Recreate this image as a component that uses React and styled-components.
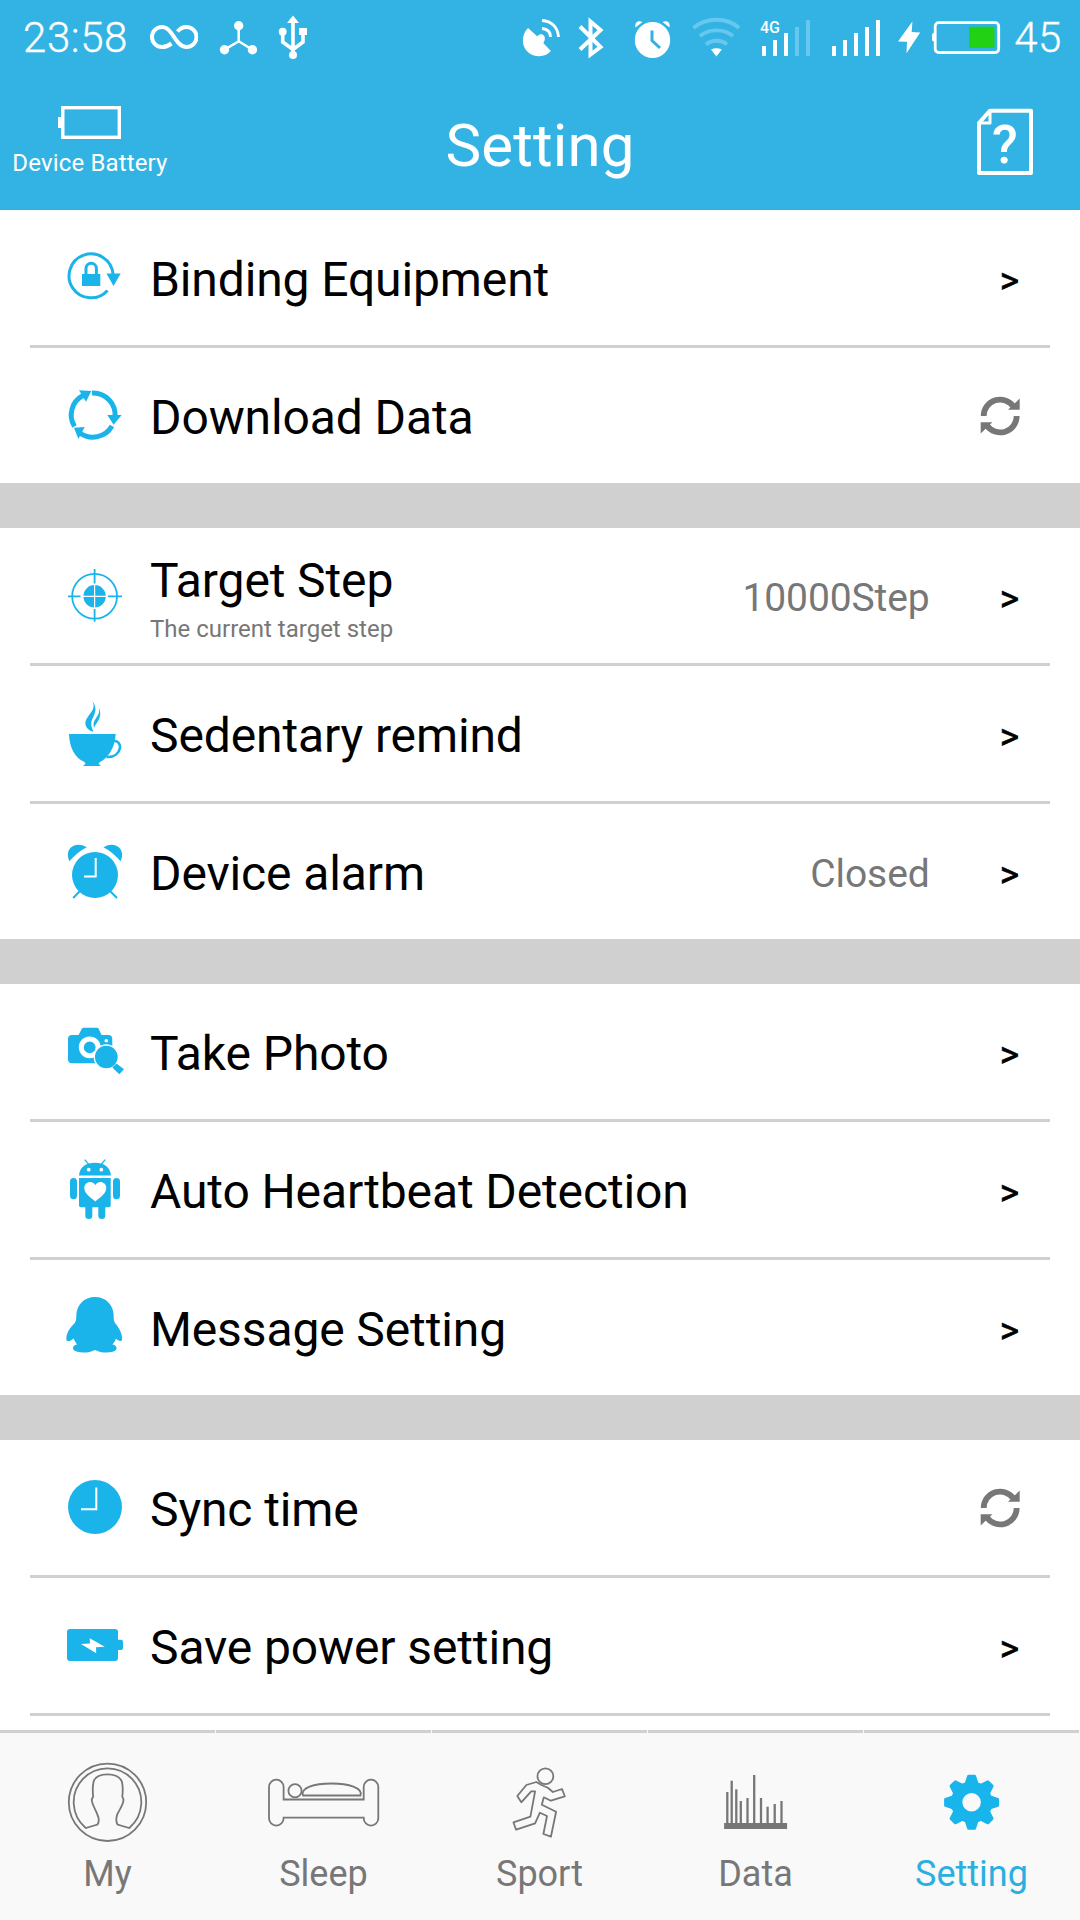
import React from 'react';
import styled, { createGlobalStyle } from 'styled-components';

// Styles
const GlobalStyle = createGlobalStyle`
  * {
    box-sizing: border-box;
  }
  body {
    margin: 0;
    background: #fff;
    font-family: Roboto, "Noto Sans", sans-serif;
  }
  svg {
    display: block;
    flex: none;
  }
`;

const Screen = styled.div`
  width: 1080px;
  height: 1920px;
  display: flex;
  flex-direction: column;
  overflow: hidden;
  background: #fff;
`;

const StatusBar = styled.div`
  flex: none;
  height: 70px;
  padding: 0 18px 0 23px;
  display: flex;
  align-items: center;
  justify-content: space-between;
  background: #33b3e3;
  color: #fff;
`;

const StatusGroup = styled.div`
  display: flex;
  align-items: center;
`;

const StatusText = styled.span`
  margin-left: ${props => props.$gap || 0}px;
  padding-top: 5px;
  font-size: 42px;
  font-weight: 300;
  line-height: 48px;
  letter-spacing: 0.6px;
  -webkit-text-stroke: 0.3px #fff;
`;

const StatusIcon = styled.svg`
  margin-left: ${props => props.$gap || 0}px;
`;

const TopBar = styled.header`
  flex: none;
  height: 140px;
  display: grid;
  grid-template-columns: 180px 1fr 180px;
  background: #33b3e3;
  color: #fff;
`;

const DeviceBattery = styled.div`
  display: flex;
  flex-direction: column;
  align-items: center;
  padding-top: 36px;

  span {
    margin-top: 10px;
    font-size: 24px;
    line-height: 28px;
    letter-spacing: 0.15px;
  }
`;

const Title = styled.h1`
  margin: 0;
  padding-top: 41px;
  text-align: center;
  font-size: 60px;
  font-weight: 400;
  line-height: 70px;
  letter-spacing: 0.15px;
`;

const HelpButton = styled.div`
  padding: 37px 0 0 76px;
`;

const List = styled.main`
  flex: 1;
  min-height: 0;
  overflow: hidden;
  display: flex;
  flex-direction: column;
  gap: 45px;
  background: #d0d0d0;
`;

const Section = styled.section`
  flex: none;
  padding: 0 30px;
  background: #fff;

  &:last-child {
    flex: 1 0 auto;
  }
`;

const Row = styled.div`
  height: ${props => (props.$line ? 138 : 135)}px;
  border-bottom: ${props => (props.$line ? '3px solid #d0d0d0' : 'none')};
  padding: 0 30px 0 34px;
  display: flex;
  align-items: center;
`;

const RowText = styled.div`
  flex: 1;
  margin-left: 26px;
  padding-top: 4px;
`;

const RowTitle = styled.div`
  font-size: 48px;
  line-height: 56px;
  letter-spacing: -0.12px;
  color: #000;
`;

const RowNote = styled.div`
  font-size: 24px;
  line-height: 28px;
  margin-top: 6px;
  color: #777;
`;

const RowValue = styled.div`
  padding-top: 4px;
  margin-right: 70px;
  font-size: 39px;
  line-height: 46px;
  letter-spacing: -0.1px;
  color: #777;
`;

const Chevron = styled.div`
  padding-top: 6px;
  margin-right: 1px;
  font-size: 37px;
  line-height: 42px;
  color: #000;
  -webkit-text-stroke: 0.7px #000;
`;

const TabBar = styled.nav`
  flex: none;
  height: 190px;
  display: flex;
  background: #f9f9f9;
`;

const Tab = styled.div`
  flex: 1;
  display: flex;
  flex-direction: column;
  align-items: center;
  color: ${props => (props.$active ? '#2bafe0' : '#777')};

  &:before {
    content: '';
    align-self: stretch;
    height: 3px;
    margin-right: 1px;
    background: #d0d0d0;
  }
  svg {
    margin-top: 24px;
  }
  span {
    margin-top: 6px;
    padding-right: 1px;
    font-size: 36px;
    line-height: 42px;
  }
`;

// Row icons
const BLUE = '#1ab4ea';

const RowIcon = ({ children }) => (
  <svg width="60" height="75" viewBox="0 0 60 75" fill={BLUE}>{children}</svg>
);

const LockIcon = () => (
  <RowIcon>
    <path d="M49 34A22 22 0 1 0 43.5 50.5" fill="none" stroke={BLUE} strokeWidth="3" />
    <path d="M42.5 33.5H56.7L49.5 46Z" />
    <path d="M22 34V28.5a5.2 5.2 0 0 1 10.4 0V34" fill="none" stroke={BLUE} strokeWidth="3" />
    <rect x="18" y="34" width="18.3" height="12" />
  </RowIcon>
);

const CycleIcon = () => (
  <RowIcon>
    <g fill="none" stroke={BLUE} strokeWidth="5">
      <path d="M10.5 48.5A22 22 0 0 1 19 17.5" />
      <path d="M28 15A22 22 0 0 1 51 39" />
      <path d="M48 48A22 22 0 0 1 16 55" />
    </g>
    <path d="M15 12.3L27.4 13 22 23.7Z" />
    <path d="M43.3 37H57.7L49.6 46.7Z" />
    <path d="M10 49.7L20.7 49 14.4 61Z" />
  </RowIcon>
);

const TargetIcon = () => (
  <RowIcon>
    <g fill="none" stroke={BLUE} strokeWidth="1.8">
      <circle cx="30.6" cy="38.3" r="22.4" />
      <path d="M4 38.3H16.5M44 38.3H58M30.6 11V25.5M30.6 51V63.7" />
    </g>
    <circle cx="30.6" cy="38.3" r="11.2" />
    <path d="M19 38.3H42M30.6 27V50" stroke="#fff" strokeWidth="1.2" />
  </RowIcon>
);

const CupIcon = () => (
  <RowIcon>
    <path d="M28 4.5C34 14 22 19 21.4 27C21.3 31.5 25 34.8 29.6 35.8C26.8 30 26.6 26 28.8 22C32 15.5 33 11 28 4.5Z" />
    <path d="M34.2 9.5C36.5 17 34 19 31.8 22.5C29.3 26 29.3 28 30 32C32 27 38 22 35.8 14.5Z" />
    <path d="M5 38H51.7C51 52 44 62 36 66L34.5 67.8 37 70H19L21.5 67.8 20.5 66C11 62 5.5 52 5 38Z" />
    <path d="M49.5 45C54 44.5 56.5 48 56 52C55 57 51 61.500 42.500 61" fill="none" stroke={BLUE} strokeWidth="2.6" />
  </RowIcon>
);

const AlarmIcon = () => (
  <RowIcon>
    <circle cx="31" cy="41" r="23" />
    <path d="M5.5 27.3C-.5 15 11 6 22.8 13.2C16 16.5 10 22 5.5 27.3Z" />
    <path d="M56.5 27.3C62.5 15 51 6 39.4 13.2C46 16.5 52 22 56.5 27.3Z" />
    <path d="M9.2 64L16 57M53 64L46 57" stroke={BLUE} strokeWidth="2" />
    <path d="M31.7 24V42.5H20" fill="none" stroke="#fff" strokeWidth="2" />
  </RowIcon>
);

const CameraIcon = () => (
  <RowIcon>
    <rect x="4" y="21" width="44.3" height="28.3" rx="4" />
    <path d="M14 22L18 14.5Q18.5 13.7 19.5 13.7H33Q34 13.7 34.5 14.5L38 22Z" />
    <circle cx="25.7" cy="33.3" r="8.4" stroke="#fff" strokeWidth="5" />
    <circle cx="42.3" cy="26.7" r="1.8" fill="#fff" />
    <circle cx="42.3" cy="43" r="12" stroke="#fff" strokeWidth="1.3" />
    <path d="M52.5 49.5L60 55.3 55.3 60.3 48.3 53.5Z" />
  </RowIcon>
);

const RobotIcon = () => (
  <RowIcon>
    <path d="M15 23.5C15.5 15 22 10.7 31 10.7S46.4 15 46.9 23.5Z" />
    <path d="M20.7 7.7L25 12.7M41.2 7.7L37 12.7" stroke={BLUE} strokeWidth="1.3" />
    <circle cx="24.7" cy="17.7" r="1.9" fill="#fff" />
    <circle cx="37.3" cy="17.7" r="1.9" fill="#fff" />
    <path d="M15 26H46.7V53.3A2 2 0 0 1 44.7 55.3H17A2 2 0 0 1 15 53.3Z" />
    <rect x="6" y="26" width="7" height="21.3" rx="3.5" />
    <rect x="49" y="26" width="7" height="21.3" rx="3.5" />
    <rect x="21.3" y="50" width="7" height="17" rx="3.5" />
    <rect x="34.3" y="50" width="7" height="17" rx="3.5" />
    <path d="M31.3 49.5C26 45 20.3 41.5 20.3 35.8C20.3 30 28 27.5 31.3 33C34.6 27.5 42.3 30 42.3 35.8C42.3 41.5 36.6 45 31.3 49.5Z" fill="#fff" />
  </RowIcon>
);

const PenguinIcon = () => (
  <RowIcon>
    <path d="M31 7C42 7 49.7 15 49.7 26C49.5 29 50 31 51 33C55.5 38 58.5 44 58 50C57 52 54 50.5 51.8 48.5C51.5 50.5 50 52.5 48.5 54.5C53.5 55.5 54 60 49.5 61.6C43 63.5 36 62.5 31 60C26 62.5 19 63.5 12.5 61.6C7.5 60 8 55.5 13 54.5C11.5 52.5 10.5 50.5 9.5 48.5C7.5 50.5 4.5 52 2.5 50.5C1.5 44 5.5 38 10.8 33C12 31 12.3 29 12.3 26C12.3 15 20 7 31 7Z" />
  </RowIcon>
);

const ClockIcon = () => (
  <RowIcon>
    <circle cx="31" cy="37" r="27" />
    <path d="M32.3 17.5V39.3H17" fill="none" stroke="#fff" strokeWidth="2" />
  </RowIcon>
);

const PowerIcon = () => (
  <RowIcon>
    <rect x="3" y="21" width="51" height="32" rx="3" />
    <path d="M53 31.7H57Q59 31.7 59 34V40Q59 42 57 42H53Z" />
    <path d="M17 36L26 35.5 25.7 30.3 40.7 38.7 32 39.2 32.2 45.3Z" fill="#fff" />
  </RowIcon>
);

const RefreshIcon = () => (
  <svg width="40" height="40" viewBox="0 0 40 40">
    {[0, 180].map(angle => (
      <g key={angle} transform={`rotate(${angle} 20.2 20)`}>
        <path d="M3.7 20A16.4 16.4 0 0 1 33.5 10.5" fill="none" stroke="#777" strokeWidth="5.8" />
        <path d="M28 13.8L39.7 2.5V13.8Z" fill="#777" />
      </g>
    ))}
  </svg>
);

// Tab icons
const TabIcon = ({ children }) => (
  <svg width="120" height="90" viewBox="0 0 120 90" fill="none" stroke="#777" strokeWidth="1.8">{children}</svg>
);

const MyIcon = () => (
  <TabIcon>
    <circle cx="59.5" cy="45.3" r="38.7" />
    <path d="M37.7 71A33.8 33.8 0 1 1 81.3 71L69.5 67.5C68 65 68.2 61 69 58C71 53 75.5 48 75.5 42.5L74.3 39.5C75 34 75 30 74 25C72 19 66 17.3 59.5 17.3S47 19 45.5 25C44.5 30 44.5 34 45.2 39.5L43.7 42.5C44 48 48 53 49.5 58C51 61 51 65 49.5 67.5Z" />
  </TabIcon>
);

const SleepIcon = () => (
  <TabIcon>
    <path d="M5 30A7.3 7.3 0 0 1 19.6 30V42.5H99.7V30A7.3 7.3 0 0 1 114.3 30V61.3A7.3 7.3 0 0 1 99.7 61.3V60.7H19.6V61.3A7.3 7.3 0 0 1 5 61.3Z" />
    <circle cx="31" cy="33.7" r="6.6" />
    <path d="M39 38.5C36 31 50 26.5 67.5 26.5S99 31 96.5 38.5Z" />
  </TabIcon>
);

const SportIcon = () => (
  <TabIcon>
    <circle cx="65.4" cy="19.3" r="7.9" />
    <path strokeLinejoin="round" d="M61 27.7L56.3 25 46.4 28 37.3 39 41.3 45.3 51.2 34.3H55.1L50.4 59.7 33.4 65.3 36.1 72.7 55.1 66.3 59.9 55.7 67 59 63.4 77 70.9 79.7 76.1 54.7 61.8 47.7 63.8 40.3 70.9 43.7 84.8 39.3 82 32 72.9 35 67.8 30.7Z" />
  </TabIcon>
);

const bars = [
  [31.3, 35], [35.7, 23.7], [40.3, 32.3], [44.8, 44], [51.5, 41],
  [58.2, 18], [65, 41], [71.6, 49.7], [78.7, 47], [85.5, 44],
];

const DataIcon = () => (
  <TabIcon>
    {bars.map(([x, top]) => <path key={x} d={`M${x} ${top}V68`} strokeWidth="2.3" />)}
    <rect x="28.1" y="66" width="63" height="6" fill="#777" stroke="none" />
  </TabIcon>
);

const GearIcon = () => (
  <svg width="120" height="90" viewBox="0 0 120 90" fill="#17b5ec">
    <circle cx="59.6" cy="45.3" r="15" fill="none" stroke="#17b5ec" strokeWidth="11.5" />
    {[0, 45, 90, 135, 180, 225, 270, 315].map(angle => (
      <path key={angle} d="M52.5 27L55.2 18.8Q55.5 17.8 56.5 17.8H62.7Q63.7 17.8 64 18.8L66.7 27Z" transform={`rotate(${angle} 59.6 45.3)`} />
    ))}
  </svg>
);

const sections = [
  [
    { icon: LockIcon, title: 'Binding Equipment' },
    { icon: CycleIcon, title: 'Download Data', refresh: true },
  ],
  [
    { icon: TargetIcon, title: 'Target Step', note: 'The current target step', value: '10000Step' },
    { icon: CupIcon, title: 'Sedentary remind' },
    { icon: AlarmIcon, title: 'Device alarm', value: 'Closed' },
  ],
  [
    { icon: CameraIcon, title: 'Take Photo' },
    { icon: RobotIcon, title: 'Auto Heartbeat Detection' },
    { icon: PenguinIcon, title: 'Message Setting' },
  ],
  [
    { icon: ClockIcon, title: 'Sync time', refresh: true },
    { icon: PowerIcon, title: 'Save power setting', line: true },
  ],
];

const tabs = [
  { icon: MyIcon, label: 'My' },
  { icon: SleepIcon, label: 'Sleep' },
  { icon: SportIcon, label: 'Sport' },
  { icon: DataIcon, label: 'Data' },
  { icon: GearIcon, label: 'Setting', active: true },
];

const SignalBars = ({ x, active }) => (
  <>
    {[46, 40, 33, 27, 20].map((top, i) => (
      <rect key={top} x={x + i * 11} y={top} width="4" height={56 - top} fill={i < active ? '#fff' : '#66c8ee'} />
    ))}
  </>
);

const Status = () => (
  <StatusBar>
    <StatusGroup>
      <StatusText>23:58</StatusText>
      <StatusIcon $gap={22} width="48" height="70" viewBox="150 0 48 70" fill="none" stroke="#fff" strokeWidth="4">
        <path d="M171.5 43.5C168 46 165.5 47 162 47A10 10 0 0 1 162 27C173 27 175 47 186.5 47A10 10 0 0 0 186.5 27C183 27 180 28.5 177.5 31.5" />
      </StatusIcon>
      <StatusIcon $gap={21} width="38" height="70" viewBox="219 0 38 70" fill="#fff">
        <path d="M238.7 26V41.3L224.5 49.7M238.7 41.3L252.4 49.7" fill="none" stroke="#fff" strokeWidth="2.5" />
        <circle cx="238.7" cy="25.7" r="4.7" />
        <circle cx="224.5" cy="49.7" r="4.7" />
        <circle cx="252.4" cy="49.7" r="4.7" />
      </StatusIcon>
      <StatusIcon $gap={21} width="30" height="70" viewBox="278 0 30 70" fill="#fff">
        <path d="M293 20V54M282.7 32V42L293 49.5 303 42V33" fill="none" stroke="#fff" strokeWidth="3.6" />
        <path d="M287 23L293 15.5 299 23Z" />
        <circle cx="282.7" cy="31.7" r="3.9" />
        <circle cx="293" cy="55" r="4" />
        <rect x="299" y="28" width="8" height="7" />
      </StatusIcon>
    </StatusGroup>
    <StatusGroup>
      <StatusIcon width="40" height="70" viewBox="521 0 40 70" fill="#fff">
        <path d="M528 28C521 35 521 47 529 53C536 58 546 57 550.8 51L543.3 43C545.5 40 545.5 36 542.5 34.5C540.5 33.8 538.5 34.5 537.5 36.5Z" />
        <path d="M542 20.5C552 21 558 28 558.5 37M542 28.5C547.500 29 550.500 32 550.500 37" fill="none" stroke="#fff" strokeWidth="2.8" />
      </StatusIcon>
      <StatusIcon $gap={17} width="28" height="70" viewBox="578 0 28 70" fill="none" stroke="#fff" strokeWidth="4">
        <path d="M580 26.5L600.5 47 590.5 54.500V21.500L600.500 30 580 49.5" />
      </StatusIcon>
      <StatusIcon $gap={28} width="38" height="70" viewBox="634 0 38 70" fill="#fff">
        <ellipse cx="652.5" cy="40" rx="17.7" ry="18" />
        <path d="M635.5 27.500C634.500 22 638 20 642.500 22ZM669.500 27.500C670.500 22 667 20 662.500 22Z" />
        <path d="M652 30.5V40.5L660 48" fill="none" stroke="#33b3e3" strokeWidth="3" />
      </StatusIcon>
      <StatusIcon $gap={20} width="48" height="70" viewBox="692 0 48 70" fill="none" stroke="#66c8ee" strokeWidth="3.8">
        <path d="M693.5 28C706 17 727 17 739 28M700 36C709 28.500 724 28.500 733 36M706 44.5C712 39.500 721 39.500 727 44.5" />
        <path d="M711 49.500Q716.400 47 721.800 49.500L716.400 56.500Z" fill="#fff" stroke="none" />
      </StatusIcon>
      <StatusIcon $gap={20} width="50" height="70" viewBox="760 0 50 70" fill="#fff">
        <text x="760" y="33" fontSize="16" fontWeight="500" fontFamily="Roboto, sans-serif">4G</text>
        <SignalBars x={762} active={3} />
      </StatusIcon>
      <StatusIcon $gap={21} width="50" height="70" viewBox="831 0 50 70">
        <SignalBars x={832} active={5} />
      </StatusIcon>
      <StatusIcon $gap={16} width="24" height="70" viewBox="897 0 24 70" fill="#fff">
        <path d="M912.4 21.5L898 41.5 907 41.8 906.5 53.3 920.2 32.5 911.7 32Z" />
      </StatusIcon>
      <StatusIcon $gap={10} width="70" height="70" viewBox="931 0 70 70">
        <rect x="935.2" y="22.7" width="63.5" height="29.8" rx="3.5" fill="none" stroke="#fff" strokeWidth="2.8" />
        <path d="M934 33Q932 33 932 35V39.5Q932 41.5 934 41.5Z" fill="#fff" />
        <rect x="969" y="26.7" width="25.5" height="21.3" fill="#22d014" />
      </StatusIcon>
      <StatusText $gap={13}>45</StatusText>
    </StatusGroup>
  </StatusBar>
);

const App = () => {
  return (
    <Screen>
      <GlobalStyle />
      <Status />
      <TopBar>
        <DeviceBattery>
          <svg width="64" height="33" viewBox="0 0 64 33">
            <rect x="4.8" y="1.7" width="56.5" height="29.6" fill="none" stroke="#fff" strokeWidth="3.4" />
            <rect x="0" y="11" width="4" height="11" fill="#fff" />
          </svg>
          <span>Device Battery</span>
        </DeviceBattery>
        <Title>Setting</Title>
        <HelpButton>
          <svg width="58" height="70" viewBox="976 107 58 70" fill="none" stroke="#fff" strokeWidth="4" strokeLinejoin="round">
            <path d="M990 110.7H1031V173H979V123Z" />
            <path d="M990 111V123H979" strokeWidth="3" />
            <text x="1005" y="162.5" textAnchor="middle" fontSize="53" fontWeight="500" fontFamily="Roboto, sans-serif" fill="#fff" stroke="none">?</text>
          </svg>
        </HelpButton>
      </TopBar>

      <List>
        {sections.map((rows, s) => (
          <Section key={s}>
            {rows.map((row, i) => (
              <Row key={row.title} $line={row.line || i < rows.length - 1}>
                <row.icon />
                <RowText>
                  <RowTitle>{row.title}</RowTitle>
                  {row.note && <RowNote>{row.note}</RowNote>}
                </RowText>
                {row.value && <RowValue>{row.value}</RowValue>}
                {row.refresh ? <RefreshIcon /> : <Chevron>&gt;</Chevron>}
              </Row>
            ))}
          </Section>
        ))}
      </List>

      <TabBar>
        {tabs.map(tab => (
          <Tab key={tab.label} $active={tab.active}>
            <tab.icon />
            <span>{tab.label}</span>
          </Tab>
        ))}
      </TabBar>
    </Screen>
  );
};

export default App;
